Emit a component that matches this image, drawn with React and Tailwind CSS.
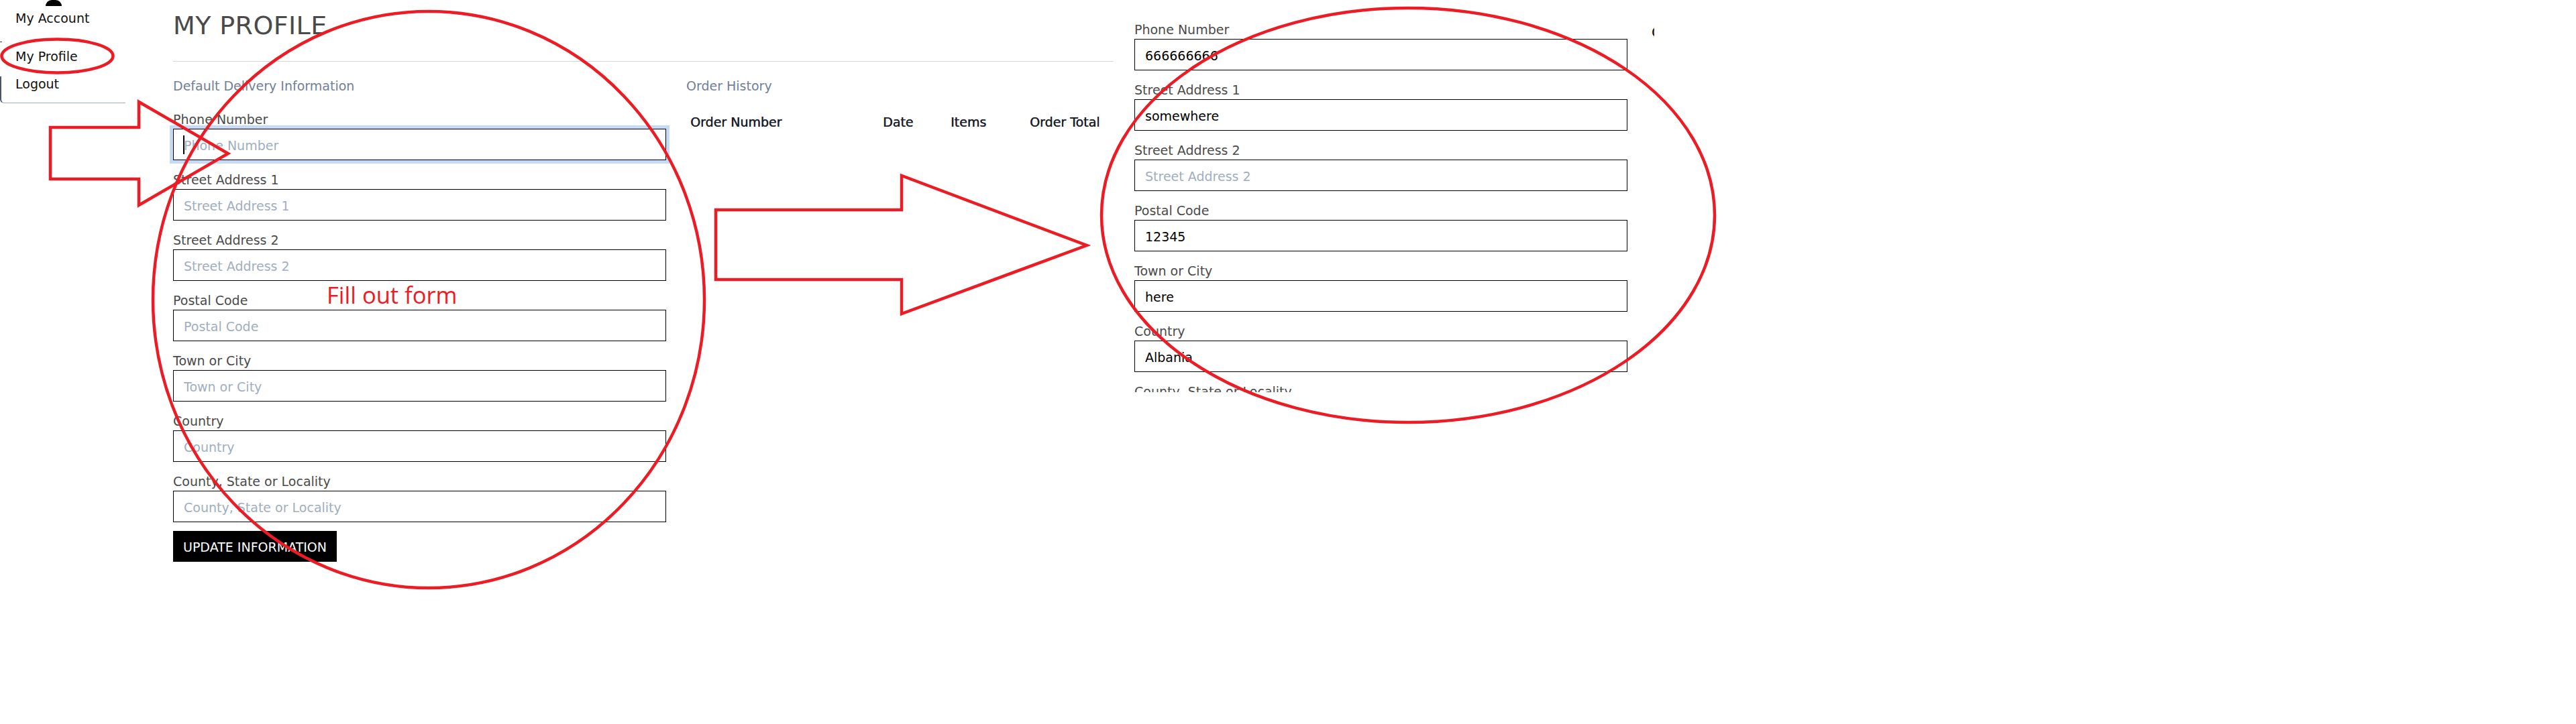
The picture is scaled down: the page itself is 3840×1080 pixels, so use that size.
import React from "react";

const fields = [
  { label: "Phone Number", key: "phone" },
  { label: "Street Address 1", key: "s1" },
  { label: "Street Address 2", key: "s2" },
  { label: "Postal Code", key: "pc" },
  { label: "Town or City", key: "town" },
  { label: "Country", key: "country" },
  { label: "County, State or Locality", key: "county" },
];

function Field({ label, value, focused }) {
  return (
    <div className="flex flex-col">
      <label className="h-6 text-[19px] leading-6 text-[#4a4a4a] whitespace-nowrap">{label}</label>
      <div className="relative mt-[2px] w-[735px]">
        <input
          readOnly
          value={value || ""}
          placeholder={label}
          className={
            "block h-[47px] w-[735px] border border-black bg-white pl-[15px] pr-3 pt-[3px] text-[19px] leading-6 text-black outline-none placeholder:text-[#a0aec0] " +
            (focused ? "shadow-[0_0_0_5px_#c4daf8]" : "")
          }
        />
        {focused && <span className="absolute left-[15px] top-[10px] h-[28px] w-[2px] bg-black" />}
      </div>
    </div>
  );
}

function TableHeader() {
  return (
    <div className="grid grid-cols-[287px_101px_118px_132px] text-[19px] leading-6 text-[#1a202c] [text-shadow:0.4px_0_0_#1a202c] whitespace-nowrap">
      <div className="pl-[6px]">Order Number</div>
      <div className="pl-[6px]">Date</div>
      <div className="pl-[6px]">Items</div>
      <div className="pl-[6px]">Order Total</div>
    </div>
  );
}

function Sidebar() {
  return (
    <div className="flex w-[187px] shrink-0 flex-col text-[19px] text-[#111]">
      <div className="ml-[68px] h-[9px] w-[24px] rounded-b-none rounded-t-[11px] bg-black" />
      <div className="mt-[6px] pl-[23px] leading-6">My Account</div>
      <div className="mt-[23px] h-px w-[3px] bg-[#333]" />
      <div className="mt-[9px] pl-[23px] leading-6">My Profile</div>
      <div className="mt-[18px] h-[40px] rounded-bl-[6px] border-b border-l-2 border-b-[#a0aec0] border-l-[#4a5568] pl-[21px] leading-5">
        <div className="pt-px">Logout</div>
      </div>
    </div>
  );
}

function Main() {
  return (
    <div className="ml-[71px] flex w-[1402px] shrink-0 flex-col pt-[16px]">
      <h1 className="text-[38px] leading-[44px] tracking-[0.4px] text-[#4a4a4a]">MY PROFILE</h1>
      <div className="mt-[31px] h-px w-full bg-[#d6d6d6]" />
      <div className="mt-[24px] flex gap-[30px]">
        <div className="flex w-[735px] flex-col">
          <div className="text-[19px] leading-6 text-[#718096]">Default Delivery Information</div>
          <div className="mt-[26px] flex flex-col gap-[17px]">
            {fields.map((f, i) => (
              <Field key={f.key} label={f.label} focused={i === 0} />
            ))}
          </div>
          <button className="mt-[13px] self-start bg-black px-[15px] pt-[12px] pb-[10px] text-[19px] leading-6 text-white">
            UPDATE INFORMATION
          </button>
        </div>
        <div className="flex w-[638px] flex-col">
          <div className="text-[19px] leading-6 text-[#718096]">Order History</div>
          <div className="mt-[30px]">
            <TableHeader />
          </div>
        </div>
      </div>
    </div>
  );
}

function FilledShot() {
  const values = {
    phone: "666666666",
    s1: "somewhere",
    s2: "",
    pc: "12345",
    town: "here",
    country: "Albania",
    county: "",
  };
  return (
    <div className="ml-[5px] h-[585px] w-[801px] shrink-0 overflow-hidden bg-white">
      <div className="flex gap-[30px] pl-[26px]">
        <div className="flex w-[735px] shrink-0 flex-col gap-[17px] pt-[32px]">
          {fields.map((f) => (
            <Field key={f.key} label={f.label} value={values[f.key]} />
          ))}
        </div>
        <div className="w-[638px] shrink-0 pt-[36px]">
          <TableHeader />
        </div>
      </div>
    </div>
  );
}

function Annotations() {
  return (
    <svg
      className="pointer-events-none absolute left-0 top-0"
      width="3840"
      height="1080"
      viewBox="0 0 3840 1080"
      fill="none"
      stroke="#ed1c24"
      strokeWidth="4.5"
      strokeLinejoin="miter"
    >
      <ellipse cx="85.5" cy="83.5" rx="83" ry="25" />
      <polygon points="75,190 207,190 207,152 340,229 207,306 207,267 75,267" />
      <ellipse cx="639" cy="447" rx="411" ry="430" />
      <polygon points="1067,313 1344,313 1344,262 1620,366 1344,468 1344,417 1067,417" />
      <ellipse cx="2099" cy="321" rx="457" ry="309" />
    </svg>
  );
}

export default function App() {
  return (
    <div className="relative h-[1080px] w-[3840px] overflow-hidden bg-white font-['DejaVu_Sans',sans-serif]">
      <div className="flex items-start">
        <Sidebar />
        <Main />
        <FilledShot />
      </div>
      <Annotations />
      <div className="pointer-events-none absolute left-[487px] top-[423px] font-['Open_Sans',sans-serif] text-[34.5px] leading-none text-[#ed1c24] whitespace-nowrap">
        Fill out form
      </div>
    </div>
  );
}
